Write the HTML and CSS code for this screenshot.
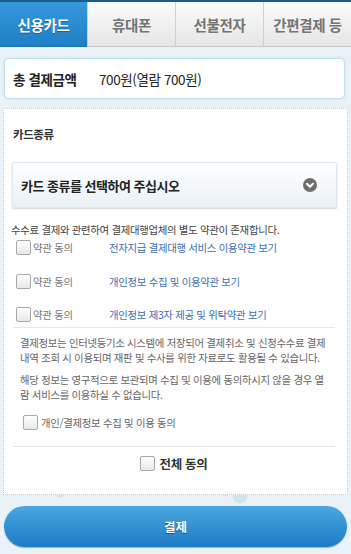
FILE: index.html
```html
<!DOCTYPE html>
<html lang="ko">
<head>
<meta charset="utf-8">
<title>결제</title>
<link rel="stylesheet" href="styles.css">
</head>
<body>
<nav class="tabs">
  <div class="tab active">신용카드</div>
  <div class="tab">휴대폰</div>
  <div class="tab">선불전자</div>
  <div class="tab">간편결제 등</div>
</nav>
<main class="content">
  <div class="total">
    <span class="total-label">총 결제금액</span>
    <span class="total-amount">700원(열람 700원)</span>
  </div>
  <section class="panel">
    <div class="section-title">카드종류</div>
    <div class="select">
      <span>카드 종류를 선택하여 주십시오</span>
      <svg class="select-icon" width="14" height="14" viewBox="0 0 14 14"><circle cx="7" cy="7" r="7" fill="#6e6e6e"/><path d="M4 5.8 L7 8.8 L10 5.8" fill="none" stroke="#fff" stroke-width="2" stroke-linecap="round" stroke-linejoin="round"/></svg>
    </div>
    <p class="notice">수수료 결제와 관련하여 결제대행업체의 별도 약관이 존재합니다.</p>
    <ul class="terms">
      <li class="term"><span class="cb"></span><span class="agree">약관 동의</span><a class="term-link">전자지급 결제대행 서비스 이용약관 보기</a></li>
      <li class="term"><span class="cb"></span><span class="agree">약관 동의</span><a class="term-link">개인정보 수집 및 이용약관 보기</a></li>
      <li class="term"><span class="cb"></span><span class="agree">약관 동의</span><a class="term-link">개인정보 제3자 제공 및 위탁약관 보기</a></li>
    </ul>
    <div class="info">
      <p>결제정보는 인터넷등기소 시스템에 저장되어 결제취소 및 신청수수료 결제 내역 조회 시 이용되며 재판 및 수사를 위한 자료로도 활용될 수 있습니다.</p>
      <p>해당 정보는 영구적으로 보관되며 수집 및 이용에 동의하시지 않을 경우 열람 서비스를 이용하실 수 없습니다.</p>
    </div>
    <div class="consent"><span class="cb"></span><span>개인/결제정보 수집 및 이용 동의</span></div>
    <div class="all"><span class="cb"></span><span>전체 동의</span></div>
  </section>
  <button class="pay">결제</button>
</main>
</body>
</html>
```
FILE: styles.css
```css
* { box-sizing: border-box; }
html, body { margin: 0; padding: 0; }
body {
  width: 351px;
  height: 554px;
  overflow: hidden;
  font-family: "Noto Sans CJK KR", "Noto Sans", sans-serif;
  background:
    radial-gradient(circle at 14px 470px, rgba(190,220,232,.7) 0 6px, transparent 7px),
    radial-gradient(circle at 60px 492px, rgba(190,220,232,.6) 0 5px, transparent 6px),
    radial-gradient(circle at 240px 496px, rgba(190,220,232,.6) 0 7px, transparent 8px),
    radial-gradient(circle at 225px 492px, rgba(190,220,232,.5) 0 4px, transparent 5px),
    #e8f2f7;
}
.tabs {
  display: flex;
  height: 47px;
  border-top: 2px solid #1a5a8e;
}
.tab {
  flex: 1;
  display: flex;
  align-items: center;
  justify-content: center;
  font-size: 14.5px;
  font-weight: 700;
  color: #747474;
  letter-spacing: -0.4px;
  background: linear-gradient(#fbfbfb, #e6e6e6);
  border-left: 1px solid #cfcfcf;
  border-bottom: 1px solid #c8c8c8;
}
.tab.active {
  color: #fff;
  background: linear-gradient(#3598db, #1e7fc6);
  border-left: none;
  border-bottom: 1px solid #1b73b5;
  text-shadow: 0 1px 1px rgba(0,0,0,.3);
}
.content {
  padding: 11px 3px 0;
}
.total {
  margin: 0 3px 0 1px;
  height: 41px;
  display: flex;
  align-items: center;
  background: #fff;
  border: 1.5px solid #c4e0ec;
  border-radius: 5px;
  box-shadow: 0 0 2px rgba(150,200,220,.5);
  padding-left: 8px;
  font-size: 13.5px;
  color: #222;
  letter-spacing: -0.4px;
}
.total-label { font-weight: 700; width: 86px; }
.total-amount { font-weight: 400; }
.panel {
  margin-top: 9px;
  background: #fff;
  border: 1px dotted #b9cfdb;
  padding: 17px 10px 21px 8px;
}
.section-title {
  font-size: 11.5px;
  font-weight: 700;
  color: #333;
  line-height: 16px;
  padding-left: 1px;
  letter-spacing: -0.4px;
}
.select {
  margin-top: 20px;
  height: 46px;
  display: flex;
  align-items: center;
  justify-content: space-between;
  padding: 0 19px 0 8px;
  background: linear-gradient(#ffffff, #e9f1f6);
  border: 1px solid #e0e8ee;
  box-shadow: 0 1px 2px rgba(0,0,0,.18);
  border-radius: 2px;
  font-size: 13px;
  font-weight: 700;
  color: #222;
  letter-spacing: -0.5px;
}
.select-icon { display: block; }
.notice {
  margin: 15px 0 0 -1px;
  font-size: 10.4px;
  line-height: 14px;
  color: #444;
  letter-spacing: -0.3px;
}
.terms {
  list-style: none;
  margin: 3px 0 0;
  padding: 0 0 0 4px;
  display: flex;
  flex-direction: column;
  gap: 18.5px;
}
.term {
  display: flex;
  align-items: center;
  height: 15px;
  font-size: 10.4px;
  letter-spacing: -0.3px;
}
.cb {
  flex: none;
  width: 15px;
  height: 15px;
  border: 1px solid #a9a9a9;
  border-radius: 2px;
  background: linear-gradient(#ffffff, #e8e8e8);
}
.agree {
  width: 78px;
  padding-left: 2px;
  color: #777;
}
.term-link { color: #3c6fb4; }
.info {
  margin: 5px 2px 0 1px;
  border-top: 1px solid #e6e6e6;
  padding: 7px 2px 0 7px;
}
.info p {
  margin: 0;
  font-size: 10.4px;
  line-height: 15px;
  color: #666;
  letter-spacing: -0.3px;
}
.info p + p { margin-top: 6.5px; }
.consent {
  margin: 13px 0 0 11px;
  display: flex;
  align-items: center;
  gap: 3px;
  font-size: 10.4px;
  color: #666;
  letter-spacing: -0.3px;
}
.all {
  margin: 16px 2px 0 1px;
  border-top: 1px solid #e6e6e6;
  padding-top: 7px;
  display: flex;
  align-items: center;
  justify-content: center;
  gap: 4px;
  font-size: 12.5px;
  font-weight: 700;
  color: #333;
  letter-spacing: -0.3px;
}
.pay {
  display: block;
  margin: 11px 1px 0 1px;
  width: 343px;
  height: 41px;
  border: none;
  border-radius: 21px;
  background: linear-gradient(#4aa7e1, #1d7bc4);
  box-shadow: 0 1px 1px rgba(0,60,110,.35);
  font-family: "Noto Sans CJK KR", "Noto Sans", sans-serif;
  font-size: 12.5px;
  font-weight: 700;
  color: #fff;
  text-shadow: 0 1px 1px rgba(0,0,0,.45);
  padding: 0;
}
```
